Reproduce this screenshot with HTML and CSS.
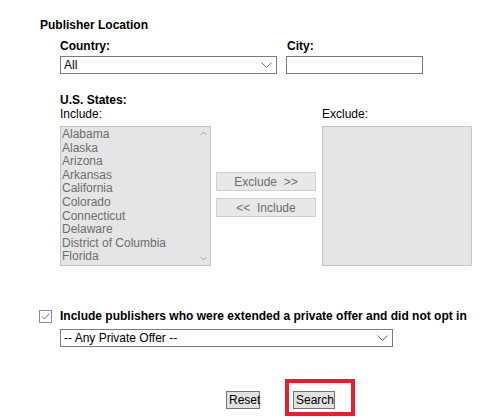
FILE: index.html
```html
<!DOCTYPE html>
<html>
<head>
<meta charset="utf-8">
<link rel="stylesheet" href="styles.css">
</head>
<body>
<div class="page">
  <div class="heading">Publisher Location</div>

  <div class="loc-row">
    <div class="field">
      <div class="label">Country:</div>
      <div class="select country-select">
        <span>All</span>
        <svg class="chev" width="11" height="7" viewBox="0 0 11 7"><path d="M0.5 0.5 L5.5 5.5 L10.5 0.5" fill="none" stroke="#6a6a6a" stroke-width="1"/></svg>
      </div>
    </div>
    <div class="field">
      <div class="label city-label">City:</div>
      <div class="input city-input"></div>
    </div>
  </div>

  <div class="states">
    <div class="label">U.S. States:</div>
    <div class="states-row">
      <div class="col">
        <div class="sub">Include:</div>
        <div class="listbox">
          <div class="opt">Alabama</div>
          <div class="opt">Alaska</div>
          <div class="opt">Arizona</div>
          <div class="opt">Arkansas</div>
          <div class="opt">California</div>
          <div class="opt">Colorado</div>
          <div class="opt">Connecticut</div>
          <div class="opt">Delaware</div>
          <div class="opt">District of Columbia</div>
          <div class="opt">Florida</div>
          <svg class="sc sc-up" width="7" height="5" viewBox="0 0 7 5"><path d="M0.5 4 L3.5 1 L6.5 4" fill="none" stroke="#a8a8a8" stroke-width="1"/></svg>
          <svg class="sc sc-down" width="7" height="5" viewBox="0 0 7 5"><path d="M0.5 1 L3.5 4 L6.5 1" fill="none" stroke="#a8a8a8" stroke-width="1"/></svg>
        </div>
      </div>
      <div class="mid">
        <button class="move">Exclude&nbsp;&nbsp;&gt;&gt;</button>
        <button class="move">&lt;&lt;&nbsp;&nbsp;Include</button>
      </div>
      <div class="col">
        <div class="sub">Exclude:</div>
        <div class="listbox empty"></div>
      </div>
    </div>
  </div>

  <div class="private">
    <div class="check-row">
      <span class="checkbox">
        <svg width="13" height="13" viewBox="0 0 13 13"><path d="M3 6.5 L5.5 9 L10 4" fill="none" stroke="#6e6e6e" stroke-width="1"/></svg>
      </span>
      <span class="check-text">Include publishers who were extended a private offer and did not opt in</span>
    </div>
    <div class="select offer-select">
      <span>-- Any Private Offer --</span>
      <svg class="chev" width="11" height="7" viewBox="0 0 11 7"><path d="M0.5 0.5 L5.5 5.5 L10.5 0.5" fill="none" stroke="#6a6a6a" stroke-width="1"/></svg>
    </div>
  </div>

  <div class="actions">
    <button class="btn reset">Reset</button>
    <div class="search-box">
      <button class="btn search">Search</button>
    </div>
  </div>
</div>
</body>
</html>
```

FILE: styles.css
```css
* { box-sizing: border-box; }

html, body {
  margin: 0;
  padding: 0;
  background: #ffffff;
}

body {
  font-family: "Liberation Sans", Arial, sans-serif;
  font-size: 12px;
  color: #000;
}

.page {
  padding: 18px 0 0 40px;
}

.heading {
  font-weight: bold;
  line-height: 14px;
}

.loc-row {
  display: flex;
  gap: 9px;
  margin-top: 7px;
  padding-left: 20px;
}

.label {
  font-weight: bold;
  line-height: 14px;
}

.city-label {
  padding-left: 1px;
}

.field .select,
.field .input {
  margin-top: 3px;
}

.select {
  display: flex;
  align-items: center;
  justify-content: space-between;
  height: 18px;
  border: 1px solid #7a7a7a;
  background: #fff;
  padding: 0 4px 0 3px;
  line-height: 14px;
}

.country-select { width: 217px; }

.input {
  width: 137px;
  height: 18px;
  border: 1px solid #7a7a7a;
  background: #fff;
}

.chev { display: block; }

.states {
  margin-top: 19px;
  padding-left: 20px;
}

.states-row {
  display: flex;
  gap: 5px;
}

.sub {
  line-height: 14px;
  margin-bottom: 5px;
}

.listbox {
  position: relative;
  width: 151px;
  height: 140px;
  background: #e5e5e5;
  border: 1px solid #c6c6c6;
  color: #6d6d6d;
  padding: 1px 0 0 1px;
}

.listbox.empty {
  width: 150px;
}

.opt {
  height: 13.6px;
  line-height: 13.6px;
  white-space: nowrap;
}

.sc {
  position: absolute;
  right: 3px;
  display: block;
}
.sc-up { top: 4px; }
.sc-down { bottom: 4px; }

.mid {
  display: flex;
  flex-direction: column;
  gap: 7px;
  padding-top: 65px;
  margin-right: 1px;
}

button {
  font-family: "Liberation Sans", Arial, sans-serif;
  font-size: 12px;
  margin: 0;
}

.move {
  width: 100px;
  height: 19px;
  padding: 0;
  background: #e8e8e8;
  border: 1px solid #cfcfcf;
  color: #6d6d6d;
  line-height: 16px;
}

.private {
  margin-top: 43px;
}

.check-row {
  display: flex;
  align-items: center;
  height: 14px;
  margin-left: -1px;
}

.checkbox {
  display: block;
  width: 13px;
  height: 13px;
  border: 1px solid #8c8c8c;
  background: #fff;
  margin-right: 8px;
  position: relative;
}
.checkbox svg {
  position: absolute;
  left: -1px;
  top: -1px;
  display: block;
}

.check-text {
  font-weight: bold;
  line-height: 14px;
}

.offer-select {
  width: 333px;
  margin-top: 6px;
  margin-left: 20px;
}

.actions {
  display: flex;
  align-items: flex-start;
  margin-top: 44px;
  padding-left: 186px;
}

.btn {
  display: block;
  height: 18px;
  padding: 0 2px;
  background: #e1e1e1;
  border: 1px solid #767676;
  color: #000;
  line-height: 15px;
}

.reset { width: 34px; }
.search { width: 42px; }

.search-box {
  margin: -12px 0 0 25px;
  padding: 8px 16px 3px 4px;
  border: 4px solid #e3202b;
}
```
